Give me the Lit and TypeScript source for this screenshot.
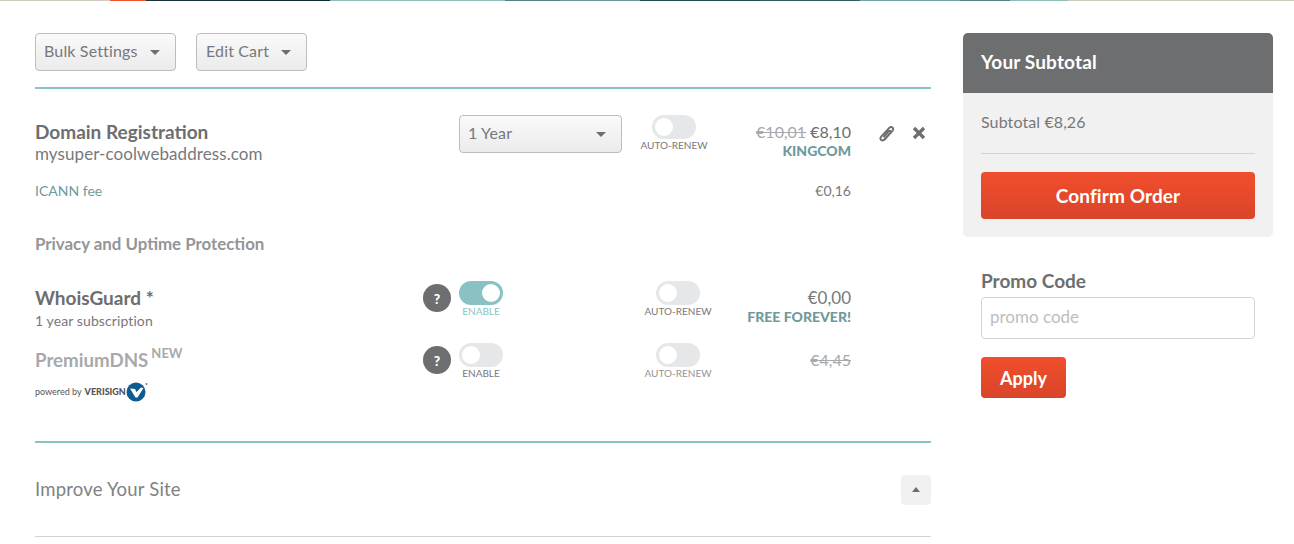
import { LitElement, html, css } from "lit";
import { customElement } from "lit/decorators.js";

const caret = html`<span class="caret"></span>`;

@customElement("app-toggle")
class AppToggle extends LitElement {
  static properties = { on: { type: Boolean }, label: {}, dim: { type: Boolean } };
  on = false; label = ""; dim = false;
  static styles = css`
    :host { display: flex; flex-direction: column; align-items: center; width: 68px; }
    .track { width: 44px; height: 24px; border-radius: 12px; background: #e6e7e8; display: flex; align-items: center; padding: 0 3px; box-sizing: border-box; }
    .track.on { background: #8ac2c3; justify-content: flex-end; }
    .knob { width: 18px; height: 18px; border-radius: 50%; background: #fff; }
    .label { font: 400 10px/12px Lato, sans-serif; color: #77787b; white-space: nowrap; }
    .label.on { color: #8ac2c3; }
    .label.dim { color: #939598; }
  `;
  render() {
    return html`<div class="track ${this.on ? "on" : ""}"><div class="knob"></div></div>
      <div class="label ${this.on ? "on" : ""} ${this.dim ? "dim" : ""}">${this.label}</div>`;
  }
}

@customElement("app-root")
class AppRoot extends LitElement {
  static styles = css`
    :host { display: block; width: 1294px; height: 544px; overflow: hidden; background: #fff; font-family: Lato, "Open Sans", sans-serif; color: #6d6e70; }
    .strip { height: 1px; background: linear-gradient(90deg, #cfcbbd 0 110px, #f0502b 110px 146px, #16343c 146px 240px, #0f2a30 240px 330px, #8fbdb8 330px 505px, #4d8087 505px 560px, #6d9a9c 560px 640px, #1f4a52 640px 760px, #2d5c63 760px 860px, #6fa6a8 860px 960px, #4d8087 960px 1010px, #8fbdb8 1010px 1068px, #cfcbbd 1068px); }
    .page { display: flex; padding: 32px 21px 0 35px; }
    .main { width: 896px; }
    .side { width: 310px; margin-left: 32px; }

    .btn { display: flex; align-items: center; justify-content: space-between; box-sizing: border-box; height: 38px; padding: 0 15px 3px 8px; border: 1px solid #bcbdbf; border-radius: 4px; background: linear-gradient(#fafafa, #ebebec); font-size: 16px; font-weight: 400; color: #77787b; letter-spacing: .15px; }
    .caret { width: 0; height: 0; margin-top: 3px; border-left: 5px solid transparent; border-right: 5px solid transparent; border-top: 5px solid #6d6e70; }
    .toolbar { display: flex; gap: 20px; height: 54px; border-bottom: 2px solid #8ac2c3; }
    .b1 { width: 141px; }
    .b2 { width: 111px; padding-left: 9px; }

    .domain { display: flex; margin-top: 26px; height: 55px; }
    .name { font-size: 19px; font-weight: 700; line-height: 24px; }
    .title-col { width: 424px; padding-top: 5px; }
    .sub { font-size: 17px; line-height: 20px; letter-spacing: .08px; color: #77787b; }
    .sel { width: 163px; }
    .t-col { width: 86px; display: flex; justify-content: flex-end; }
    .price-col { width: 143px; text-align: right; padding-top: 7px; font-size: 16px; line-height: 20px; color: #6d6e70; }
    .old { color: #a7a9ac; text-decoration: line-through; }
    .promo { font-size: 14px; font-weight: 900; line-height: 18px; color: #6e9a9b; }
    .icons { display: flex; align-items: flex-start; margin-left: 28px; padding-top: 11px; gap: 17px; }
    .icons svg { display: block; }

    .fee { display: flex; justify-content: space-between; width: 816px; font-size: 14px; line-height: 20px; margin-top: 11px; }
    .fee .l { color: #6e9a9b; }
    .fee .r { color: #77787b; }
    .heading { font-size: 16.85px; font-weight: 700; color: #939598; line-height: 20px; margin-top: 33px; }

    .svc { display: flex; width: 816px; }
    .svc .info { width: 388px; }
    .q { width: 28px; height: 28px; border-radius: 50%; background: #6d6e70; color: #fff; font-size: 14px; font-weight: 900; display: flex; align-items: center; justify-content: center; margin-top: 3px; }
    .svc app-toggle { margin-left: -4px; }
    .svc .auto { margin-left: 129px; }
    .svc .price { flex: 1; text-align: right; font-size: 17px; line-height: 20px; padding-top: 7px; color: #77787b; }
    .whois { margin-top: 27px; height: 62px; }
    .premium { height: 62px; }
    .gname { font-size: 19px; font-weight: 700; line-height: 24px; padding-top: 5px; }
    .small { font-size: 14px; line-height: 18px; margin-top: 2px; letter-spacing: .1px; color: #77787b; }
    .dim { color: #a7a9ac; font-size: 18.7px; }
    sup { font-size: 13px; font-weight: 700; line-height: 0; vertical-align: 9px; margin-left: 3px; }
    .ftag { font-size: 14px; font-weight: 900; color: #6e9a9b; line-height: 18px; }
    .old.sm { font-size: 16px; }
    .veri { display: flex; align-items: center; margin-top: 10px; font-size: 9px; line-height: 20px; color: #555; }
    .veri b { font-weight: 900; margin-left: 3px; color: #555; }
    .veri svg { display: block; }

    .end { margin-top: 36px; border-top: 2px solid #8ac2c3; border-bottom: 1px solid #d1d3d4; height: 93px; display: flex; align-items: center; justify-content: space-between; }
    .end span { font-size: 18.5px; color: #808285; font-weight: 400; letter-spacing: .2px; padding-bottom: 1px; }
    .up { width: 30px; height: 30px; border-radius: 4px; background: #f1f1f2; display: flex; align-items: center; justify-content: center; }
    .up i { width: 0; height: 0; border-left: 4px solid transparent; border-right: 4px solid transparent; border-bottom: 5px solid #6d6e70; }

    .card { border-radius: 5px; background: #f1f1f2; overflow: hidden; height: 204px; }
    .card h2 { margin: 0; background: #6d6e70; color: #fff; height: 60px; padding-bottom: 3px; box-sizing: border-box; display: flex; align-items: center; padding-left: 18px; font-size: 19px; font-weight: 700; letter-spacing: .15px; }
    .card .body { padding: 0 18px; }
    .subtotal { font-size: 16px; line-height: 20px; padding: 19px 0 21px; border-bottom: 1px solid #d1d3d4; letter-spacing: .1px; color: #77787b; }
    .cta { display: flex; align-items: center; justify-content: center; color: #fff; background: linear-gradient(#f04e2c, #d9452b); border-radius: 4px; font-weight: 700; }
    .confirm { height: 47px; margin-top: 18px; font-size: 19px; letter-spacing: .1px; }
    .promo-box { padding: 32px 18px 0; }
    .plabel { font-size: 19px; font-weight: 700; line-height: 24px; }
    .input { box-sizing: border-box; height: 42px; margin-top: 4px; border: 1px solid #d1d3d4; border-radius: 4px; padding: 0 8px 3px; display: flex; align-items: center; font-size: 17px; color: #bcbec0; }
    .apply { width: 85px; height: 41px; margin-top: 18px; font-size: 18px; }
  `;

  render() {
    return html`
      <div class="strip"></div>
      <div class="page">
        <div class="main">
          <div class="toolbar">
            <div class="btn b1">Bulk Settings ${caret}</div>
            <div class="btn b2">Edit Cart ${caret}</div>
          </div>
          <div class="domain">
            <div class="title-col">
              <div class="name">Domain Registration</div>
              <div class="sub">mysuper-coolwebaddress.com</div>
            </div>
            <div class="btn sel">1 Year ${caret}</div>
            <div class="t-col"><app-toggle label="AUTO-RENEW"></app-toggle></div>
            <div class="price-col">
              <div><span class="old">€10,01</span> €8,10</div>
              <div class="promo">KINGCOM</div>
            </div>
            <div class="icons">
              <svg width="16" height="16" viewBox="0 0 16 16" fill="none" stroke="#6d6e70" stroke-width="1.9" stroke-linecap="round" stroke-linejoin="round">
                <path d="M5.4 13.8 13.2 5.2c1.2-1.4 1.1-2.9.2-3.7-1-.8-2.3-.6-3.4.6L2.4 10.4c-1.2 1.4-1.2 2.8-.3 3.6 1 .8 2.2.6 3.3-.6l5.9-6.6c.6-.7.6-1.4.1-1.8-.5-.4-1.2-.3-1.8.3L5 10.6" />
              </svg>
              <svg width="14" height="14" viewBox="0 0 14 14" stroke="#6d6e70" stroke-width="3.2"><path d="M2 2l10 10M12 2 2 12" /></svg>
            </div>
          </div>
          <div class="fee"><span class="l">ICANN fee</span><span class="r">€0,16</span></div>
          <div class="heading">Privacy and Uptime Protection</div>
          <div class="svc whois">
            <div class="info">
              <div class="gname">WhoisGuard *</div>
              <div class="small">1 year subscription</div>
            </div>
            <div class="q">?</div>
            <app-toggle on label="ENABLE"></app-toggle>
            <app-toggle class="auto" label="AUTO-RENEW"></app-toggle>
            <div class="price">€0,00<div class="ftag">FREE FOREVER!</div></div>
          </div>
          <div class="svc premium">
            <div class="info">
              <div class="gname dim">PremiumDNS<sup>NEW</sup></div>
              <div class="veri">powered by<b>VERISIGN</b>
                <svg width="22" height="20" viewBox="0 0 22 20">
                  <circle cx="10" cy="10" r="9.5" fill="#0f5a8f" />
                  <path d="M4 6.5 9 7l1.5 3L15 5.5l2.5.5-6 9.5H9.5z" fill="#fff" />
                  <circle cx="20.5" cy="2" r="1" fill="#777" />
                </svg>
              </div>
            </div>
            <div class="q">?</div>
            <app-toggle label="ENABLE"></app-toggle>
            <app-toggle class="auto" dim label="AUTO-RENEW"></app-toggle>
            <div class="price"><span class="old sm">€4,45</span></div>
          </div>
          <div class="end"><span>Improve Your Site</span><div class="up"><i></i></div></div>
        </div>
        <div class="side">
          <div class="card">
            <h2>Your Subtotal</h2>
            <div class="body">
              <div class="subtotal">Subtotal €8,26</div>
              <div class="cta confirm">Confirm Order</div>
            </div>
          </div>
          <div class="promo-box">
            <div class="plabel">Promo Code</div>
            <div class="input">promo code</div>
            <div class="cta apply">Apply</div>
          </div>
        </div>
      </div>
    `;
  }
}
